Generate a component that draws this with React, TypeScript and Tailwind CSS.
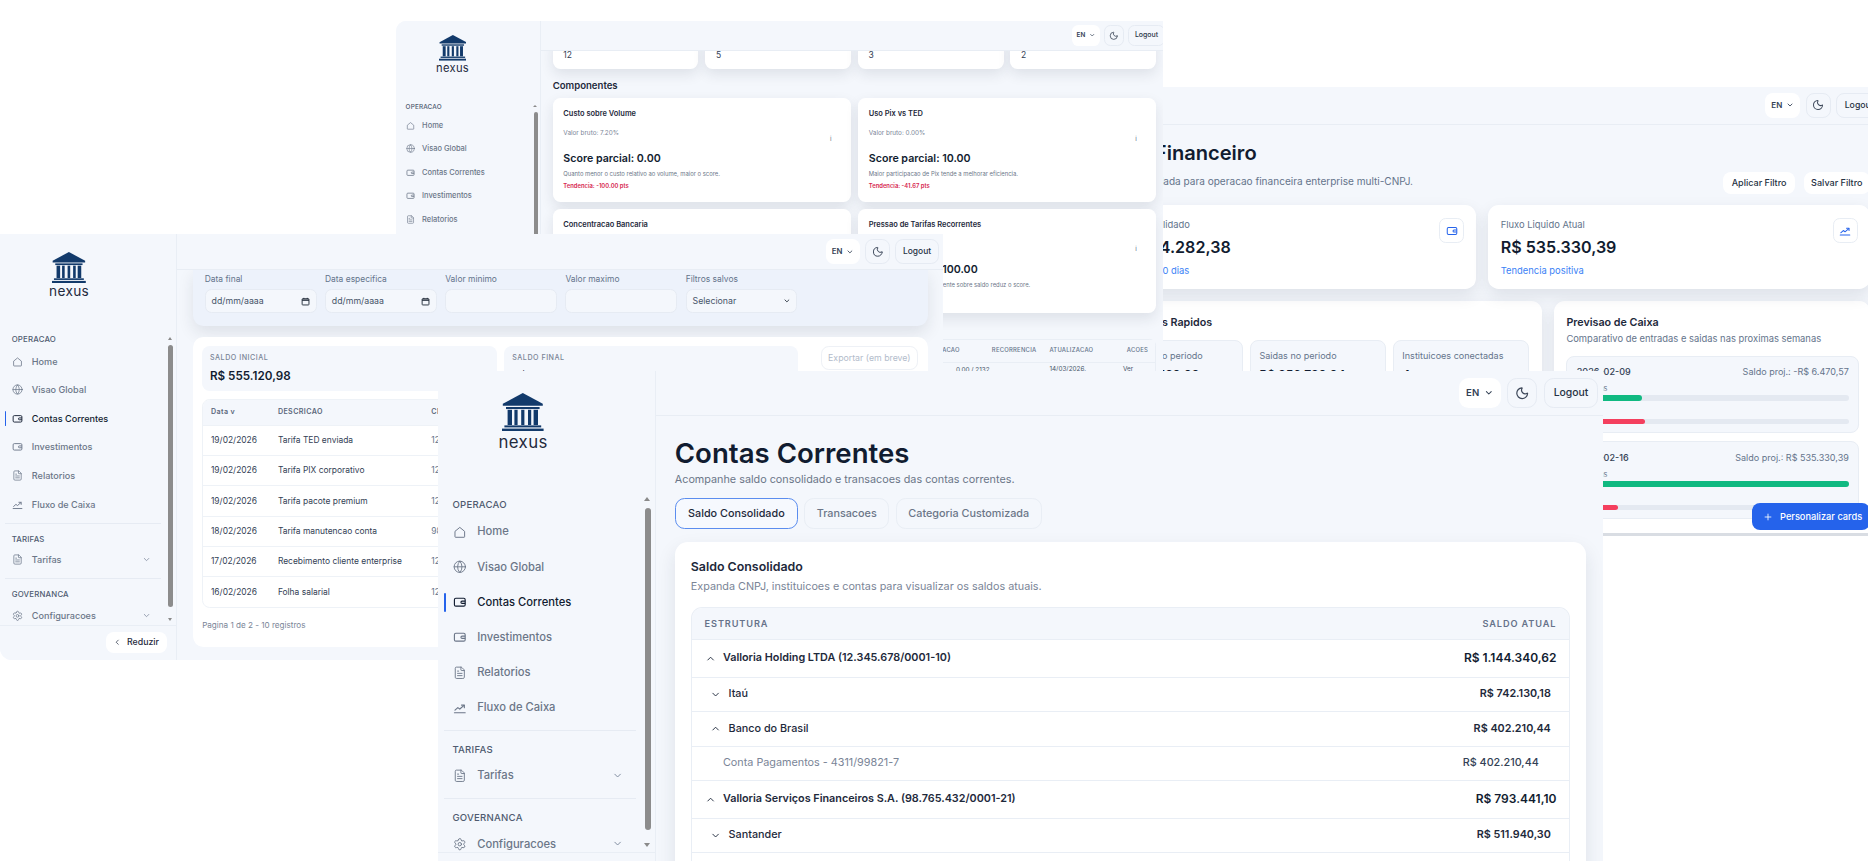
import { ChevronDown, ChevronLeft, ChevronUp, FileText, Globe, Moon, Plus, Settings } from "lucide-react";

function HomeIcon() {
  return (
    <svg viewBox="0 0 24 24" fill="none" stroke="currentColor" strokeWidth="1.7" strokeLinejoin="round" className="size-[18px]">
      <path d="M3.5 10.5L12 3.5l8.5 7V20a1 1 0 0 1-1 1h-15a1 1 0 0 1-1-1z" />
    </svg>
  );
}

function WalletIcon({ className = "size-4" }: { className?: string }) {
  return (
    <svg viewBox="0 0 24 24" fill="none" stroke="currentColor" strokeWidth="2" strokeLinejoin="round" className={className}>
      <rect x="2.5" y="5" width="19" height="14" rx="2.5" />
      <path d="M21.5 10h-5.5a2 2 0 0 0 0 4h5.5" />
    </svg>
  );
}

function TrendIcon({ className = "size-4" }: { className?: string }) {
  return (
    <svg viewBox="0 0 24 24" fill="none" stroke="currentColor" strokeWidth="2" strokeLinecap="round" strokeLinejoin="round" className={className}>
      <path d="M2.5 20h19" />
      <path d="M3.5 15.5l5-4.5 3.5 2.5 7.5-6.5" />
      <path d="M15 6.5h5v4.5" />
    </svg>
  );
}

function Logo() {
  return (
    <svg viewBox="0 0 52 48" className="h-[48px] w-[52px] text-[#123a6b]" fill="currentColor">
      <path d="M26 0L51 13.5V16H1V13.5Z" />
      <rect x="5" y="17.5" width="42" height="2.6" />
      <rect x="7" y="21" width="5.5" height="19" />
      <rect x="15.5" y="21" width="4" height="19" />
      <rect x="24" y="21" width="4" height="19" />
      <rect x="32.5" y="21" width="4" height="19" />
      <rect x="39.5" y="21" width="5.5" height="19" />
      <rect x="3" y="40.5" width="46" height="2.5" />
      <rect x="0" y="44.5" width="52" height="3.5" />
    </svg>
  );
}

function NavItem({ icon, label, active, chevron }: { icon: React.ReactNode; label: string; active?: boolean; chevron?: boolean }) {
  return (
    <div className={`relative flex h-[44px] items-center gap-[13px] pl-[12px] pr-[15px] text-[14px] font-medium ${active ? "text-[#111c30]" : "text-[#6b7688]"}`}>
      {active && <span className="absolute left-0 top-[10px] h-[24px] w-[2.5px] rounded-full bg-[#2563eb]" />}
      <span className="flex w-[17px] justify-center">{icon}</span>
      <span className="flex-1">{label}</span>
      {chevron && <ChevronDown className="size-[14px] text-[#7b869b]" />}
    </div>
  );
}

function Sidebar({ active, tall }: { active?: boolean; tall?: boolean }) {
  return (
    <aside className="relative flex h-[655px] w-[272px] shrink-0 flex-col border-r border-[#e9eef5] bg-[#f4f7fc]">
      <div className={`flex shrink-0 flex-col items-center pr-[58px] pt-[27px] ${tall ? "h-[157px]" : "h-[152px]"}`}>
        <Logo />
        <span className="mt-[1px] text-[21px] font-normal leading-[26px] tracking-[0.5px] text-[#1f2a3d]">nexus</span>
      </div>
      <nav className="ml-[7px] w-[240px] flex-1 overflow-hidden">
        <p className="pl-[11px] text-[12px] font-medium leading-[20px] tracking-[0.3px] text-[#4f5b70]">OPERACAO</p>
        <div className="mt-[2px]">
          <NavItem icon={<HomeIcon />} label="Home" />
          <NavItem icon={<Globe className="size-[17px]" strokeWidth={1.6} />} label="Visao Global" />
          <NavItem icon={<WalletIcon className={`size-[18px] ${active ? "text-[#111c30]" : ""}`} />} label="Contas Correntes" active={active} />
          <NavItem icon={<WalletIcon className="size-[18px]" />} label="Investimentos" />
          <NavItem icon={<FileText className="size-[17px]" strokeWidth={1.6} />} label="Relatorios" />
          <NavItem icon={<TrendIcon className="size-[18px]" />} label="Fluxo de Caixa" />
        </div>
        <div className="mt-[6px] border-t border-[#e6ebf3] pt-[14px]">
          <p className="pl-[11px] text-[12px] font-medium leading-[20px] tracking-[0.3px] text-[#4f5b70]">TARIFAS</p>
          <NavItem icon={<FileText className="size-[17px]" strokeWidth={1.6} />} label="Tarifas" chevron />
        </div>
        <div className="mt-[6px] border-t border-[#e6ebf3] pt-[14px]">
          <p className="pl-[11px] text-[12px] font-medium leading-[20px] tracking-[0.3px] text-[#4f5b70]">GOVERNANCA</p>
          <NavItem icon={<Settings className="size-[18px]" strokeWidth={1.6} />} label="Configuracoes" chevron />
        </div>
      </nav>
      <div className="flex h-[54px] shrink-0 items-center justify-end border-t border-[#e9eef5] pr-[14px]">
        <button className="flex h-[32px] w-[94px] items-center justify-center gap-[8px] rounded-[12px] bg-white text-[13.5px] font-medium text-[#1f2a3d]">
          <ChevronLeft className="size-[13px]" />
          Reduzir
        </button>
      </div>
      {/* native looking scrollbar */}
      <span className="absolute right-[6px] top-[158px] h-0 w-0 border-x-[4px] border-b-[5px] border-x-transparent border-b-[#8a8a8a]" />
      <span className="absolute right-[4px] top-[171px] h-[403px] w-[8px] rounded-full bg-[#8c8c8c]" />
      <span className="absolute right-[6px] top-[590px] h-0 w-0 border-x-[4px] border-t-[5px] border-x-transparent border-t-[#8a8a8a]" />
    </aside>
  );
}

function TopBar({ className = "pr-[6px]" }: { className?: string }) {
  return (
    <header className={`relative z-10 flex h-[56px] shrink-0 items-center justify-end gap-[8px] border-b border-[#e8edf4] bg-[#f4f7fc] ${className}`}>
      <div className="flex h-[38px] w-[52px] items-center justify-center gap-[6px] rounded-[12px] bg-white text-[12px] font-semibold text-[#334155]">
        EN
        <ChevronDown className="size-[12px]" strokeWidth={2.6} />
      </div>
      <button className="flex size-[38px] items-center justify-center rounded-[12px] border border-[#e6ebf3] text-[#3b4658]">
        <Moon className="size-[18px]" />
      </button>
      <button className="h-[38px] w-[68px] shrink-0 rounded-[12px] border border-[#e6ebf3] text-[13px] font-medium text-[#273244]">Logout</button>
    </header>
  );
}

const cardShadow = "shadow-[0_10px_24px_rgba(30,41,59,0.10)]";

const scoreCards = [
  { title: "Custo sobre Volume", raw: "Valor bruto: 7.20%", score: "Score parcial: 0.00", note: "Quanto menor o custo relativo ao volume, maior o score.", trend: "Tendencia: -100.00 pts" },
  { title: "Uso Pix vs TED", raw: "Valor bruto: 0.00%", score: "Score parcial: 10.00", note: "Maior participacao de Pix tende a melhorar eficiencia.", trend: "Tendencia: -41.67 pts" },
  { title: "Concentracao Bancaria", raw: "Valor bruto: 64.90%", score: "Score parcial: 3.51", note: "Menor concentracao em um unico banco melhora o score.", trend: "Tendencia: -12.40 pts" },
  { title: "Pressao de Tarifas Recorrentes", raw: "Valor bruto: 0.00%", score: "Score parcial: 100.00", note: "Maior peso de tarifa recorrente sobre saldo reduz o score.", trend: "" },
];

function ScoreCard({ card }: { card: (typeof scoreCards)[number] }) {
  return (
    <div className={`relative h-[194px] rounded-[14px] bg-white px-[20px] pt-[20px] ${cardShadow}`}>
      <h4 className="text-[14px] font-semibold leading-[20px] text-[#1e293b]">{card.title}</h4>
      <p className="mt-[17px] text-[12px] leading-[18px] text-[#7a8597]">{card.raw}</p>
      <p className="mt-[26px] text-[20px] font-semibold leading-[28px] text-[#111c30]">{card.score}</p>
      <p className="mt-[5px] text-[11px] leading-[16px] text-[#6b7688]">{card.note}</p>
      <p className="mt-[7px] text-[11px] font-semibold leading-[16px] text-[#d6264f]">{card.trend}</p>
      <span className="absolute right-[36px] top-[68px] text-[12px] text-[#64748b]">i</span>
    </div>
  );
}

function ScoreWindow() {
  return (
    <section className="absolute isolate left-[396px] top-[21px] h-[360px] w-[767px] overflow-hidden rounded-l-[10px] bg-[#f4f7fc]">
      <div className="flex h-full [zoom:0.533]">
        <Sidebar />
        <div className="flex min-w-0 flex-1 flex-col">
          <TopBar className="-mr-[3px]" />
          <div className="pl-[22px] pr-[13px]">
            <div className="-mt-[30px] grid grid-cols-4 gap-[13px]">
              {["12", "5", "3", "2"].map((v) => (
                <div key={v} className={`h-[64px] rounded-[14px] bg-white px-[20px] pt-[28px] text-[16px] leading-[20px] text-[#334155] ${cardShadow}`}>
                  {v}
                </div>
              ))}
            </div>
            <h3 className="mt-[18px] text-[18px] font-semibold leading-[28px] text-[#1e293b]">Componentes</h3>
            <div className="mt-[9px] grid grid-cols-2 gap-[14px]">
              {scoreCards.map((c) => (
                <ScoreCard key={c.title} card={c} />
              ))}
            </div>
            <div className="mt-[50px] rounded-t-[12px] border border-[#e9eef5]">
              <div className="grid h-[42px] grid-cols-[822px_108px_1fr] items-center border-b border-[#e9eef5] bg-[#f4f7fc] pr-[13px] text-[11px] font-medium tracking-[0.5px] text-[#64748b]">
                <span className="whitespace-nowrap pr-[60px] text-right">ULTIMA APLICACAO</span>
                <span>RECORRENCIA</span>
                <span className="flex justify-between">
                  ATUALIZACAO
                  <span>ACOES</span>
                </span>
              </div>
              <div className="grid grid-cols-[822px_108px_1fr] pt-[4px] pr-[41px] text-[12px] leading-[18px] text-[#475569]">
                <span className="whitespace-nowrap pr-[4px] pt-[2px] text-right">0,00 / 2132</span>
                <span />
                <span className="flex justify-between">
                  14/03/2026,
                  <span>Ver</span>
                </span>
              </div>
            </div>
          </div>
        </div>
      </div>
    </section>
  );
}

function Bar({ color, pct, className }: { color: string; pct: number; className: string }) {
  return (
    <div className={`h-[8px] rounded-full bg-[#e4e9f1] ${className}`}>
      <div className={`h-full rounded-full ${color}`} style={{ width: `${pct}%` }} />
    </div>
  );
}

function ForecastItem({ date, balance, inPct, outPct }: { date: string; balance: string; inPct: number; outPct: number }) {
  return (
    <div className="h-[116px] rounded-[12px] border border-[#e8edf4] bg-[#f4f7fc] px-[14px] pt-[13px]">
      <div className="flex justify-between text-[13.5px] leading-[20px] text-[#64748b]">
        <span className="font-medium text-[#334155]">{date}</span>
        <span>{balance}</span>
      </div>
      <p className="mt-[8px] text-[11px] leading-[14px] text-[#64748b]">Entradas</p>
      <Bar color="bg-[#10b981]" pct={inPct} className="mt-[3px]" />
      <p className="mt-[10px] text-[11px] leading-[14px] text-[#64748b]">Saidas</p>
      <Bar color="bg-[#f43f5e]" pct={outPct} className="mt-[3px]" />
    </div>
  );
}

function StatCard({ label, value, link, icon }: { label: string; value: string; link: string; icon: React.ReactNode }) {
  return (
    <div className={`relative h-[126px] rounded-[16px] bg-white px-[19px] pt-[20px] ${cardShadow}`}>
      <p className="text-[14px] leading-[20px] text-[#64748b]">{label}</p>
      <p className="mt-[8px] text-[24px] font-semibold leading-[32px] text-[#111c30]">{value}</p>
      <p className="mt-[8px] text-[14px] leading-[20px] text-[#3b82f6]">{link}</p>
      <span className="absolute right-[18px] top-[20px] flex size-[37px] items-center justify-center rounded-[10px] border border-[#e8edf4] text-[#2563eb]">{icon}</span>
    </div>
  );
}

function QuickBox({ label, value }: { label: string; value: string }) {
  return (
    <div className="h-[90px] rounded-[12px] border border-[#e8edf4] bg-[#f4f7fc] px-[13px] pt-[12px]">
      <p className="whitespace-nowrap text-[13.5px] leading-[20px] text-[#64748b]">{label}</p>
      <p className="mt-[5px] text-[18px] font-semibold leading-[26px] text-[#111c30]">{value}</p>
    </div>
  );
}

function DashboardWindow() {
  return (
    <section className="absolute isolate left-[1078px] top-[87px] h-[449px] w-[808px] overflow-hidden border-b-[3px] border-[#d9dde3] bg-[#f4f7fc]">
      <div className="h-[670px] w-[1206px] [zoom:0.67]">
        <TopBar />
        <div className="px-[24px]">
          <div className="relative h-[120px]">
            <h1 className="-ml-[5px] whitespace-nowrap pt-[21px] text-[30px] font-semibold leading-[42px] text-[#111c30]">Painel Financeiro</h1>
            <p className="mt-[12px] whitespace-nowrap text-[15px] leading-[20px] text-[#64748b]">Visao consolidada para operacao financeira enterprise multi-CNPJ.</p>
            <div className="absolute right-0 top-[71px] flex gap-[13px]">
              <button className="h-[33px] w-[107px] rounded-[12px] bg-white text-[13.5px] font-medium text-[#273244]">Aplicar Filtro</button>
              <button className="h-[33px] w-[99px] rounded-[12px] bg-white text-[13.5px] font-medium text-[#273244]">Salvar Filtro</button>
            </div>
          </div>
          <div className="grid grid-cols-2 gap-[18px]">
            <StatCard label="Saldo Consolidado" value="R$ 1.144.282,38" link="Referencia 30 dias" icon={<WalletIcon className="size-[18px]" />} />
            <StatCard label="Fluxo Liquido Atual" value="R$ 535.330,39" link="Tendencia positiva" icon={<TrendIcon className="size-[18px]" />} />
          </div>
          <div className="mt-[18px] grid grid-cols-[668px_472px] gap-[18px]">
            <div className={`h-[345px] rounded-[16px] bg-white px-[19px] pt-[20px] ${cardShadow}`}>
              <h3 className="text-[16px] font-semibold leading-[24px] text-[#1e293b]">Indicadores Rapidos</h3>
              <div className="mt-[14px] grid grid-cols-3 gap-[10px]">
                <QuickBox label="Entradas no periodo" value="R$ 792.189,92" />
                <QuickBox label="Saidas no periodo" value="R$ 256.789,94" />
                <QuickBox label="Instituicoes conectadas" value="4" />
              </div>
            </div>
            <div className={`h-[345px] rounded-t-[16px] bg-white px-[19px] pt-[20px] pr-[16px] ${cardShadow}`}>
              <h3 className="text-[16px] font-semibold leading-[24px] text-[#1e293b]">Previsao de Caixa</h3>
              <p className="mt-[2px] whitespace-nowrap text-[14px] leading-[20px] text-[#64748b]">Comparativo de entradas e saidas nas proximas semanas</p>
              <div className="mt-[15px] flex flex-col gap-[12px]">
                <ForecastItem date="2026-02-09" balance="Saldo proj.: -R$ 6.470,57" inPct={24} outPct={25} />
                <ForecastItem date="2026-02-16" balance="Saldo proj.: R$ 535.330,39" inPct={100} outPct={15} />
              </div>
            </div>
          </div>
        </div>
      </div>
    </section>
  );
}

const statement = [
  ["19/02/2026", "Tarifa TED enviada", "12.345.678/0001-10"],
  ["19/02/2026", "Tarifa PIX corporativo", "12.345.678/0001-10"],
  ["19/02/2026", "Tarifa pacote premium", "12.345.678/0001-10"],
  ["18/02/2026", "Tarifa manutencao conta", "98.765.432/0001-21"],
  ["17/02/2026", "Recebimento cliente enterprise", "12.345.678/0001-10"],
  ["16/02/2026", "Folha salarial", "12.345.678/0001-10"],
];

function CalendarGlyph() {
  return (
    <svg viewBox="0 0 16 16" className="size-[14px] text-[#1f2937]" fill="none" stroke="currentColor" strokeWidth="1.6">
      <rect x="2" y="3" width="12" height="11" rx="1" />
      <path d="M2 5.5h12" strokeWidth="2.4" />
      <path d="M5 1.5v2M11 1.5v2" />
    </svg>
  );
}

function FilterField({ label, value, calendar, chevron }: { label: string; value?: string; calendar?: boolean; chevron?: boolean }) {
  return (
    <div>
      <p className="text-[13px] leading-[18px] text-[#64748b]">{label}</p>
      <div className="mt-[5px] flex h-[37px] items-center justify-between rounded-[10px] border border-[#e6ebf3] bg-[#f4f7fc] pl-[9px] pr-[9px] text-[13.5px] text-[#475569]">
        <span>{value}</span>
        {calendar && <CalendarGlyph />}
        {chevron && <ChevronDown className="size-[12px] text-[#1f2937]" strokeWidth={2.6} />}
      </div>
    </div>
  );
}

function StatementWindow() {
  return (
    <section className="absolute isolate left-0 top-[234px] h-[426px] w-[943px] overflow-hidden rounded-b-[12px] bg-[#f4f7fc]">
      <div className="flex h-full [zoom:0.65]">
        <Sidebar active />
        <div className="flex min-w-0 flex-1 flex-col">
          <TopBar />
          <div className="pl-[25px] pr-[23px]">
            <div className={`h-[86px] rounded-b-[16px] bg-[#edf2fb] px-[18px] pt-[6px] ${cardShadow}`}>
              <div className="grid grid-cols-[172px_172px_172px_172px_172px] gap-[13px]">
                <FilterField label="Data final" value="dd/mm/aaaa" calendar />
                <FilterField label="Data especifica" value="dd/mm/aaaa" calendar />
                <FilterField label="Valor minimo" />
                <FilterField label="Valor maximo" />
                <FilterField label="Filtros salvos" value="Selecionar" chevron />
              </div>
            </div>
            <div className="mt-[16px] h-[478px] rounded-[16px] bg-white px-[14px] pt-[15px]">
              <div className="flex gap-[11px]">
                <div className="h-[69px] w-[454px] rounded-[12px] bg-[#f4f7fc] px-[12px] pt-[9px]">
                  <p className="text-[11px] font-medium leading-[18px] tracking-[0.8px] text-[#7a8597]">SALDO INICIAL</p>
                  <p className="mt-[4px] text-[18px] font-semibold leading-[28px] text-[#111c30]">R$ 555.120,98</p>
                </div>
                <div className="h-[69px] w-[452px] rounded-[12px] bg-[#f4f7fc] px-[12px] pt-[9px]">
                  <p className="text-[11px] font-medium leading-[18px] tracking-[0.8px] text-[#7a8597]">SALDO FINAL</p>
                  <p className="mt-[4px] text-[18px] font-semibold leading-[28px] text-[#111c30]">R$ 749.370,46</p>
                </div>
                <button className="ml-[24px] h-[36px] w-[149px] rounded-[12px] border border-[#eef1f6] text-[13.5px] text-[#b3bccb]">Exportar (em breve)</button>
              </div>
              <div className="mt-[12px] overflow-hidden rounded-[12px] border border-[#eef2f7]">
                <div className="grid h-[38px] grid-cols-[103px_236px_1fr] items-center bg-[#f4f7fc] pl-[12px] text-[11px] font-semibold tracking-[0.6px] text-[#5b677b]">
                  <span>Data v</span>
                  <span>DESCRICAO</span>
                  <span>CNPJ</span>
                </div>
                {statement.map((row) => (
                  <div key={row[1]} className="grid h-[46.7px] grid-cols-[103px_236px_1fr] items-center border-t border-[#eef2f7] pl-[12px] text-[13px] text-[#334155]">
                    <span>{row[0]}</span>
                    <span>{row[1]}</span>
                    <span className="text-[#64748b]">{row[2]}</span>
                  </div>
                ))}
              </div>
              <p className="mt-[17px] text-[12.5px] leading-[20px] text-[#7a8597]">Pagina 1 de 2 - 10 registros</p>
            </div>
          </div>
        </div>
      </div>
    </section>
  );
}

type BalanceRow = { name: string; value: string; kind: "root" | "bank" | "account"; open?: boolean };

const balances: BalanceRow[] = [
  { name: "Valloria Holding LTDA (12.345.678/0001-10)", value: "R$ 1.144.340,62", kind: "root", open: true },
  { name: "Itaú", value: "R$ 742.130,18", kind: "bank" },
  { name: "Banco do Brasil", value: "R$ 402.210,44", kind: "bank", open: true },
  { name: "Conta Pagamentos - 4311/99821-7", value: "R$ 402.210,44", kind: "account" },
  { name: "Valloria Serviços Financeiros S.A. (98.765.432/0001-21)", value: "R$ 793.441,10", kind: "root", open: true },
  { name: "Santander", value: "R$ 511.940,30", kind: "bank" },
  { name: "Conta Operacional - 1842/55210-3", value: "R$ 511.940,30", kind: "account" },
];

function BalanceLine({ row }: { row: BalanceRow }) {
  const Chevron = row.open ? ChevronUp : ChevronDown;
  if (row.kind === "account") {
    return (
      <div className="flex h-[43px] items-center justify-between border-t border-[#e9eef5] pl-[39px] pr-[38px] text-[13.5px] text-[#7a8597]">
        <span>{row.name}</span>
        <span className="font-medium text-[#334155]">{row.value}</span>
      </div>
    );
  }
  if (row.kind === "root") {
    return (
      <div className="flex h-[47px] items-center justify-between border-t border-[#e9eef5] pl-[16px] pr-[16px]">
        <span className="flex items-center gap-[9px] text-[13.5px] font-semibold text-[#1e293b]">
          <Chevron className="size-[14px]" />
          {row.name}
        </span>
        <span className="text-[15px] font-semibold text-[#111c30]">{row.value}</span>
      </div>
    );
  }
  return (
    <div className="flex h-[43px] items-center justify-between border-t border-[#e9eef5] pl-[23px] pr-[23px]">
      <span className="flex items-center gap-[9px] text-[13.5px] font-medium text-[#1e293b]">
        <Chevron className="size-[14px]" />
        {row.name}
      </span>
      <span className="text-[13.5px] font-semibold text-[#1e293b]">{row.value}</span>
    </div>
  );
}

function AccountsWindow() {
  return (
    <section className="absolute isolate left-[438px] top-[371px] h-[490px] w-[1165px] overflow-hidden bg-[#f4f7fc]">
      <div className="flex h-full [zoom:0.8]">
        <Sidebar active tall />
        <div className="flex min-w-0 flex-1 flex-col">
          <TopBar />
          <div className="pl-[24px] pr-[21px]">
            <h1 className="pt-[23px] text-[34.5px] font-semibold leading-[48px] text-[#111c30]">Contas Correntes</h1>
            <p className="-mt-[1px] text-[13.5px] leading-[20px] text-[#6b7688]">Acompanhe saldo consolidado e transacoes das contas correntes.</p>
            <div className="mt-[13px] flex gap-[8px]">
              <button className="h-[39px] w-[154px] rounded-[12px] border border-[#5b8def] bg-[#f6f9fe] text-[13.5px] font-medium text-[#1e293b]">Saldo Consolidado</button>
              <button className="h-[39px] w-[106px] rounded-[12px] border border-[#e9eef5] text-[13.5px] font-medium text-[#6b7688]">Transacoes</button>
              <button className="h-[39px] w-[183px] rounded-[12px] border border-[#e9eef5] text-[13.5px] font-medium text-[#6b7688]">Categoria Customizada</button>
            </div>
            <div className={`mt-[16px] h-[500px] rounded-[16px] bg-white px-[20px] pt-[20px] ${cardShadow}`}>
              <h2 className="text-[15.5px] font-semibold leading-[22px] text-[#1e293b]">Saldo Consolidado</h2>
              <p className="mt-[4px] text-[13.5px] leading-[20px] text-[#7a8597]">Expanda CNPJ, instituicoes e contas para visualizar os saldos atuais.</p>
              <div className="mt-[15px] overflow-hidden rounded-t-[14px] border-x border-t border-[#e9eef5]">
                <div className="flex h-[39px] items-center justify-between bg-[#f4f7fc] px-[16px] text-[11.5px] font-semibold tracking-[1.1px] text-[#66728a]">
                  <span>ESTRUTURA</span>
                  <span>SALDO ATUAL</span>
                </div>
                {balances.map((row) => (
                  <BalanceLine key={row.name} row={row} />
                ))}
              </div>
            </div>
          </div>
        </div>
      </div>
    </section>
  );
}

export default function App() {
  return (
    <div className="relative h-[861px] w-full overflow-hidden bg-white font-[Inter,sans-serif]">
      <DashboardWindow />
      <ScoreWindow />
      <StatementWindow />
      <AccountsWindow />
      <button className="absolute left-[1752px] top-[503px] flex h-[27px] w-[118px] items-center gap-[7px] rounded-[8px] bg-[#2563eb] pl-[11px] text-[9.25px] font-medium text-white">
        <Plus className="size-[10px]" />
        Personalizar cards
      </button>
    </div>
  );
}
